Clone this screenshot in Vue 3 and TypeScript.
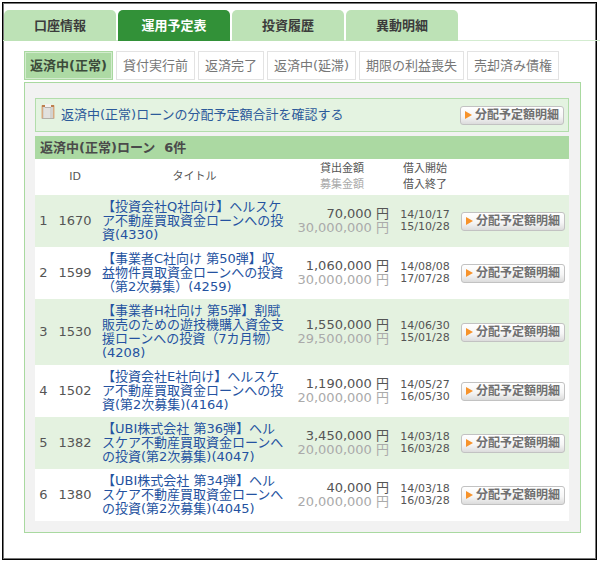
<script setup lang="ts">
interface Loan {
  id: number
  title: string
  lent: string
  raised: string
  start: string
  end: string
}

const mainTabs: string[] = ['口座情報', '運用予定表', '投資履歴', '異動明細']
const activeMain = '運用予定表'

const statusTabs: string[] = [
  '返済中(正常)',
  '貸付実行前',
  '返済完了',
  '返済中(延滞)',
  '期限の利益喪失',
  '売却済み債権',
]
const activeStatus = '返済中(正常)'

const loans: Loan[] = [
  { id: 1670, title: '【投資会社Q社向け】ヘルスケ\nア不動産買取資金ローンへの投\n資(4330)', lent: '70,000', raised: '30,000,000', start: '14/10/17', end: '15/10/28' },
  { id: 1599, title: '【事業者C社向け 第50弾】収\n益物件買取資金ローンへの投資\n（第2次募集）(4259)', lent: '1,060,000', raised: '30,000,000', start: '14/08/08', end: '17/07/28' },
  { id: 1530, title: '【事業者H社向け 第5弾】割賦\n販売のための遊技機購入資金支\n援ローンへの投資（7カ月物）\n(4208)', lent: '1,550,000', raised: '29,500,000', start: '14/06/30', end: '15/01/28' },
  { id: 1502, title: '【投資会社E社向け】ヘルスケ\nア不動産買取資金ローンへの投\n資(第2次募集)(4164)', lent: '1,190,000', raised: '20,000,000', start: '14/05/27', end: '16/05/30' },
  { id: 1382, title: '【UBI株式会社 第36弾】ヘル\nスケア不動産買取資金ローンへ\nの投資(第2次募集)(4047)', lent: '3,450,000', raised: '20,000,000', start: '14/03/18', end: '16/03/28' },
  { id: 1380, title: '【UBI株式会社 第34弾】ヘル\nスケア不動産買取資金ローンへ\nの投資(第2次募集)(4045)', lent: '40,000', raised: '20,000,000', start: '14/03/18', end: '16/03/28' },
]
</script>

<template>
  <main class="frame">
    <nav class="main-tabs">
      <a
        v-for="tab in mainTabs"
        :key="tab"
        href="#"
        class="main-tab"
        :class="{ active: tab === activeMain }"
      >{{ tab }}</a>
    </nav>

    <nav class="status-tabs">
      <a
        v-for="tab in statusTabs"
        :key="tab"
        href="#"
        class="status-tab"
        :class="{ active: tab === activeStatus }"
      >{{ tab }}</a>
    </nav>

    <section class="panel">
      <div class="notice">
        <svg class="clip" viewBox="0 0 14 16" width="14" height="16" aria-hidden="true">
          <rect x="0.5" y="1" width="13" height="14" rx="1" fill="#d8ab82" />
          <path d="M1 1h3v2H1zM10 1h3v2h-3z" fill="#bd7f4e" />
          <path d="M2 3h10v12H2z" fill="#d3d2cf" />
          <path d="M3 4h6v10H3z" fill="#e2e1de" />
          <path d="M4 0h6v3H4z" fill="#f3f1ee" />
          <path d="M4 3h6v1H4z" fill="#b5b2ae" />
          <path d="M1 14h12v1H1z" fill="#b3b0a8" />
        </svg>
        <a href="#" class="notice-link">返済中(正常)ローンの分配予定額合計を確認する</a>
        <button type="button" class="detail">
          <svg viewBox="0 0 7 8" width="7" height="8" aria-hidden="true"><path d="M0 0L7 4L0 8z" fill="#f7932b" /></svg>
          <span>分配予定額明細</span>
        </button>
      </div>

      <h2 class="heading">返済中(正常)ローン&nbsp; 6件</h2>

      <table class="loans">
        <colgroup>
          <col class="c-no" />
          <col class="c-id" />
          <col />
          <col class="c-amount" />
          <col class="c-date" />
          <col class="c-action" />
        </colgroup>
        <thead>
          <tr>
            <th></th>
            <th scope="col">ID</th>
            <th scope="col">タイトル</th>
            <th scope="col">貸出金額<br /><span class="muted">募集金額</span></th>
            <th scope="col">借入開始<br />借入終了</th>
            <th></th>
          </tr>
        </thead>
        <tbody>
          <tr v-for="(loan, i) in loans" :key="loan.id">
            <td class="center">{{ i + 1 }}</td>
            <td class="center">{{ loan.id }}</td>
            <td class="title"><a href="#">{{ loan.title }}</a></td>
            <td class="amount">{{ loan.lent }} 円<br /><span class="muted">{{ loan.raised }} 円</span></td>
            <td class="date">{{ loan.start }}<br />{{ loan.end }}</td>
            <td class="action">
              <button type="button" class="detail">
                <svg viewBox="0 0 7 8" width="7" height="8" aria-hidden="true"><path d="M0 0L7 4L0 8z" fill="#f7932b" /></svg>
                <span>分配予定額明細</span>
              </button>
            </td>
          </tr>
        </tbody>
      </table>
    </section>
  </main>
</template>

<style>
body {
  background: #fff;
}
</style>

<style scoped>
.frame {
  box-sizing: border-box;
  margin: 2px 3px 5px 2px;
  padding: 7px 0 26px;
  border: 1px solid #000;
  box-shadow: inset 0 0 0 1px #777;
  font-family: "DejaVu Sans", "Noto Sans CJK JP", sans-serif;
  font-size: 13px;
  line-height: 14px;
  color: #555;
  text-spacing-trim: space-all;
}

a {
  text-decoration: none;
}

.main-tabs {
  display: flex;
  gap: 2px;
  margin-right: -4px;
  padding-left: 1px;
  border-bottom: 1px solid #d3ecd0;
}

.main-tab {
  box-sizing: border-box;
  width: 112px;
  height: 31px;
  margin-bottom: -1px;
  border-radius: 5px 5px 0 0;
  background: #bde2b6;
  color: #3c3c3c;
  font-weight: bold;
  line-height: 31px;
  text-align: center;
}

.main-tab.active {
  background: #329138;
  color: #fff;
}

.status-tabs {
  display: flex;
  gap: 3px;
  margin: 10px 0 2px 21px;
  white-space: nowrap;
}

.status-tab {
  padding: 0 6px;
  border: 1px solid #e3e3e3;
  color: #777;
  line-height: 27px;
}

.status-tab.active {
  padding: 0 5px;
  border-color: #a9d8a0;
  background: #addaa4;
  box-shadow: inset 0 0 0 1px #d3ecce;
  color: #3c4a3a;
  font-weight: bold;
}

.panel {
  margin: 0 15px 0 21px;
  padding: 15px 11px 11px 10px;
  border: 1px solid #a9d9a0;
  background: #f2f2f2;
}

.notice {
  display: flex;
  align-items: center;
  height: 32px;
  margin-bottom: 4px;
  padding: 0 4px 0 5px;
  border: 1px solid #b2ddab;
  background: #e4f3e1;
}

.clip {
  margin: 0 6px 6px 0;
}

.notice-link {
  flex: 1;
  color: #2c5a9a;
}

.heading {
  margin: 0;
  padding: 0 5px;
  background: #abd9a2;
  color: #4a4a4a;
  font-size: 13px;
  font-weight: bold;
  line-height: 23px;
}

.loans {
  width: 100%;
  border-collapse: collapse;
  table-layout: fixed;
  background: #fff;
}

.c-no {
  width: 17px;
}

.c-id {
  width: 46px;
}

.c-amount {
  width: 102px;
}

.c-date {
  width: 64px;
}

.c-action {
  width: 112px;
}

th {
  padding: 2px 0;
  font-size: 11px;
  font-weight: normal;
  line-height: 16px;
}

td {
  padding: 5px 0;
  white-space: nowrap;
}

tbody tr:nth-child(odd) {
  background: #e4f2e0;
}

.center {
  text-align: center;
}

td.title {
  padding: 5px 4px;
  white-space: pre-line;
}

.title a {
  color: #2452a0;
}

.amount {
  padding-right: 4px;
  text-align: right;
}

.muted {
  color: #aaa;
}

.date {
  font-size: 11px;
  line-height: 12px;
  text-align: center;
}

.action {
  padding-left: 4px;
}

.detail {
  display: flex;
  align-items: center;
  gap: 3px;
  box-sizing: border-box;
  height: 19px;
  padding: 0 4px;
  border: 1px solid #c2c2c2;
  border-radius: 3px;
  background: linear-gradient(#fff, #f6f6f6 55%, #dcdcdc);
  color: #707070;
  font-family: "DejaVu Sans", "Noto Sans CJK JP", sans-serif;
  font-size: 12px;
  font-weight: bold;
  line-height: 17px;
  white-space: nowrap;
}
</style>
